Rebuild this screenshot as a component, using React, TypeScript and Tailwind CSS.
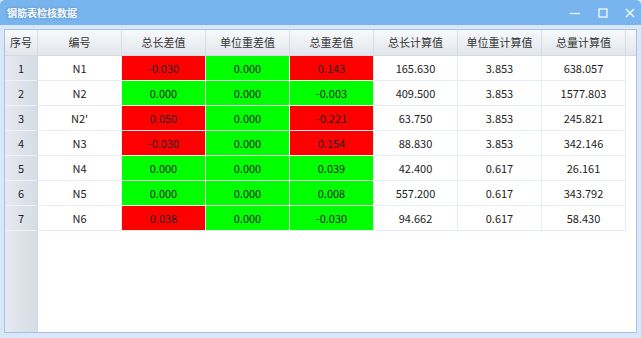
import React from 'react';

const cols = ['编号', '总长差值', '单位重差值', '总重差值', '总长计算值', '单位重计算值', '总量计算值'];

// r = 红, g = 绿
const rows = [
  { no: 1, id: 'N1', d: [['-0.030', 'r'], ['0.000', 'g'], ['0.143', 'r']], v: ['165.630', '3.853', '638.057'] },
  { no: 2, id: 'N2', d: [['0.000', 'g'], ['0.000', 'g'], ['-0.003', 'g']], v: ['409.500', '3.853', '1577.803'] },
  { no: 3, id: "N2'", d: [['0.050', 'r'], ['0.000', 'g'], ['-0.221', 'r']], v: ['63.750', '3.853', '245.821'] },
  { no: 4, id: 'N3', d: [['-0.030', 'r'], ['0.000', 'g'], ['0.154', 'r']], v: ['88.830', '3.853', '342.146'] },
  { no: 5, id: 'N4', d: [['0.000', 'g'], ['0.000', 'g'], ['0.039', 'g']], v: ['42.400', '0.617', '26.161'] },
  { no: 6, id: 'N5', d: [['0.000', 'g'], ['0.000', 'g'], ['0.008', 'g']], v: ['557.200', '0.617', '343.792'] },
  { no: 7, id: 'N6', d: [['0.038', 'r'], ['0.000', 'g'], ['-0.030', 'g']], v: ['94.662', '0.617', '58.430'] },
];

const font = { fontFamily: '"Noto Sans CJK SC", "Noto Sans", sans-serif' };

export default function App() {
  return (
    <div className="w-[641px] h-[338px] bg-[#d9e7f8] flex flex-col text-[11px] text-[#222]" style={font}>
      {/* 标题栏 */}
      <div className="h-[25px] shrink-0 bg-[#78b5ee] rounded-t-[5px] flex items-center pl-[7px]">
        <span className="text-white font-bold text-[10px] [text-shadow:0_0_3px_rgba(40,80,140,0.5)]">钢筋表检核数据</span>
        <div className="ml-auto flex items-center h-full">
          <svg className="w-[10px] h-[10px] mr-[18px]" viewBox="0 0 10 10"><path d="M0 5.5h10" stroke="white" strokeWidth="1.2" /></svg>
          <svg className="w-[10px] h-[10px] mr-[17px]" viewBox="0 0 10 10"><rect x="1" y="1" width="8" height="8" fill="none" stroke="white" strokeWidth="1.2" /></svg>
          <svg className="w-[10px] h-[10px] mr-[6px]" viewBox="0 0 10 10"><path d="M1 1l8 8M9 1l-8 8" stroke="white" strokeWidth="1.2" /></svg>
        </div>
      </div>

      {/* 表格区 */}
      <div className="flex-1 px-[4px] pt-[4px] pb-[5px] flex">
        <div className="flex-1 border border-[#a6c2e6] bg-white flex flex-col overflow-hidden">
          {/* 表头 */}
          <div className="flex h-[26px] shrink-0 bg-gradient-to-b from-[#f8f9fb] to-[#e2e6ec] border-b border-[#d3dae4] text-[#333]">
            <div className="w-[33px] shrink-0 flex items-center justify-center border-r border-[#d6dde7]">序号</div>
            {cols.map(c => (
              <div key={c} className="w-[84px] shrink-0 flex items-center justify-center border-r border-[#d6dde7]">{c}</div>
            ))}
          </div>

          <div className="flex-1 flex">
            {/* 行头列 */}
            <div className="w-[33px] shrink-0 flex flex-col bg-gradient-to-r from-[#e6eaf0] to-[#d6dce5] border-r border-[#cfd7e2]">
              {rows.map(r => (
                <div key={r.no} className="h-[25px] flex items-center justify-center border-b border-[#eef1f5]">{r.no}</div>
              ))}
            </div>

            <div className="flex flex-col">
              {rows.map(r => (
                <div key={r.no} className="flex h-[25px]">
                  <div className="w-[84px] flex items-center justify-center border-r border-b border-[#e3ecf8]">{r.id}</div>
                  {r.d.map(([val, c], i) => (
                    <div
                      key={i}
                      className={`w-[84px] flex items-center justify-center border-r border-b border-[#e8ece8] ${c === 'r' ? 'bg-[#ff0000]' : 'bg-[#00ff00]'}`}
                    >
                      {val}
                    </div>
                  ))}
                  {r.v.map((val, i) => (
                    <div key={i} className="w-[84px] flex items-center justify-center border-r border-b border-[#e3ecf8]">{val}</div>
                  ))}
                </div>
              ))}
            </div>
          </div>
        </div>
      </div>
    </div>
  );
}
